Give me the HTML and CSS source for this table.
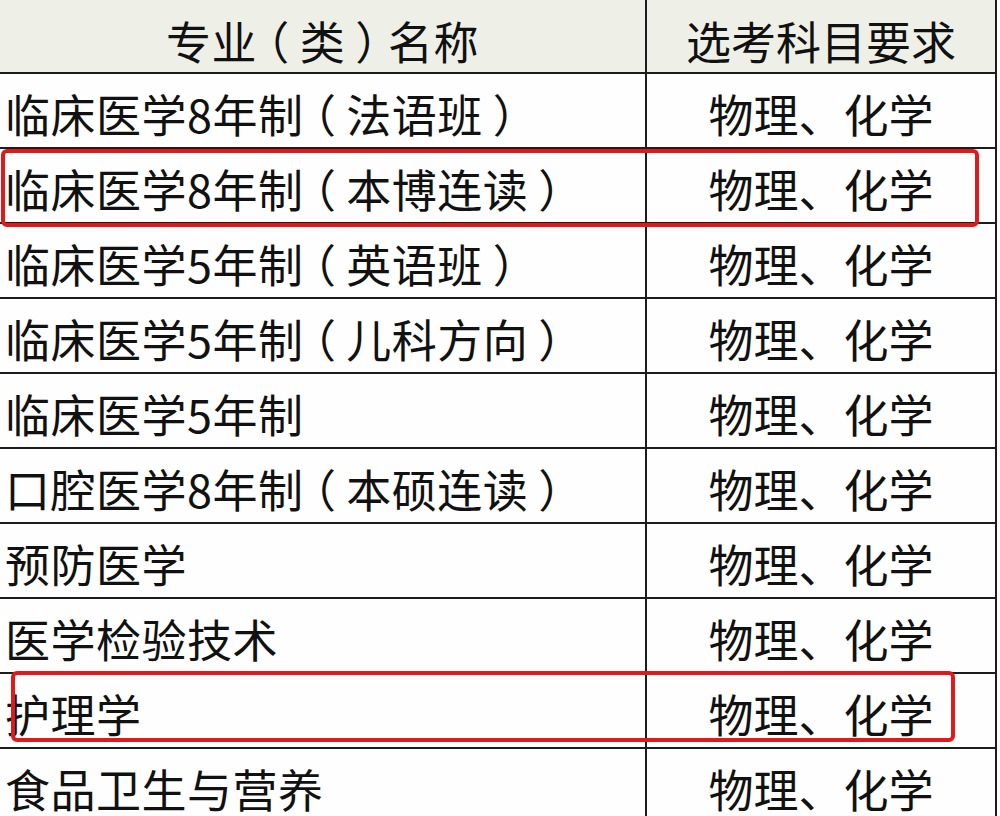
FILE: index.html
```html
<!DOCTYPE html>
<html lang="zh-CN">
<head>
<meta charset="utf-8">
<title>选考科目要求</title>
<link rel="stylesheet" href="styles.css">
</head>
<body>
<div class="sheet">
  <div class="table">
    <div class="row head">
      <div class="cell name">专业<span class="paren">（</span>类<span class="paren">）</span>名称</div>
      <div class="cell req">选考科目要求</div>
    </div>
    <div class="row"><div class="cell name">临床医学8年制<span class="paren">（</span>法语班<span class="paren">）</span></div><div class="cell req">物理、化学</div></div>
    <div class="row"><div class="cell name">临床医学8年制<span class="paren">（</span>本博连读<span class="paren">）</span></div><div class="cell req">物理、化学</div></div>
    <div class="row"><div class="cell name">临床医学5年制<span class="paren">（</span>英语班<span class="paren">）</span></div><div class="cell req">物理、化学</div></div>
    <div class="row"><div class="cell name">临床医学5年制<span class="paren">（</span>儿科方向<span class="paren">）</span></div><div class="cell req">物理、化学</div></div>
    <div class="row"><div class="cell name">临床医学5年制</div><div class="cell req">物理、化学</div></div>
    <div class="row"><div class="cell name">口腔医学8年制<span class="paren">（</span>本硕连读<span class="paren">）</span></div><div class="cell req">物理、化学</div></div>
    <div class="row"><div class="cell name">预防医学</div><div class="cell req">物理、化学</div></div>
    <div class="row"><div class="cell name">医学检验技术</div><div class="cell req">物理、化学</div></div>
    <div class="row"><div class="cell name">护理学</div><div class="cell req">物理、化学</div></div>
    <div class="row"><div class="cell name">食品卫生与营养</div><div class="cell req">物理、化学</div></div>
  </div>
  <div class="mark mark-one"></div>
  <div class="mark mark-two"></div>
</div>
</body>
</html>
```
FILE: styles.css
```css
html, body {
  margin: 0;
  padding: 0;
  background: #ffffff;
}
body {
  font-family: "Noto Sans CJK SC", "Noto Sans", sans-serif;
  color: #111111;
  overflow: hidden;
}
.sheet {
  position: relative;
  width: 1000px;
  height: 816px;
  overflow: hidden;
}
.table {
  width: 997px;
  display: flex;
  flex-direction: column;
}
.row {
  display: flex;
  height: 75px;
  box-sizing: border-box;
  border-bottom: 2px solid #1c1c1c;
  background: #fefefe;
}
.row.head {
  height: 74px;
  background: #eef0e8;
}
.cell {
  box-sizing: border-box;
  display: flex;
  align-items: center;
  font-size: 45px;
  line-height: 1;
  white-space: nowrap;
  padding-top: 5px;
}
.name {
  width: 647px;
  border-right: 2px solid #1c1c1c;
  padding-left: 5px;
  letter-spacing: 0.5px;
}
.paren {
  font-feature-settings: "halt";
  margin: 0 0.22em;
}
.req {
  width: 350px;
  border-right: 2px solid #1c1c1c;
  justify-content: center;
}
.head .cell {
  justify-content: center;
  padding-left: 0;
  padding-top: 8px;
}
.mark {
  position: absolute;
  border: 4px solid #e0191b;
  border-radius: 6px;
  box-sizing: border-box;
}
.mark-one {
  left: 1px;
  top: 149px;
  width: 978px;
  height: 78px;
}
.mark-two {
  left: 11px;
  top: 671px;
  width: 944px;
  height: 71px;
}
```
